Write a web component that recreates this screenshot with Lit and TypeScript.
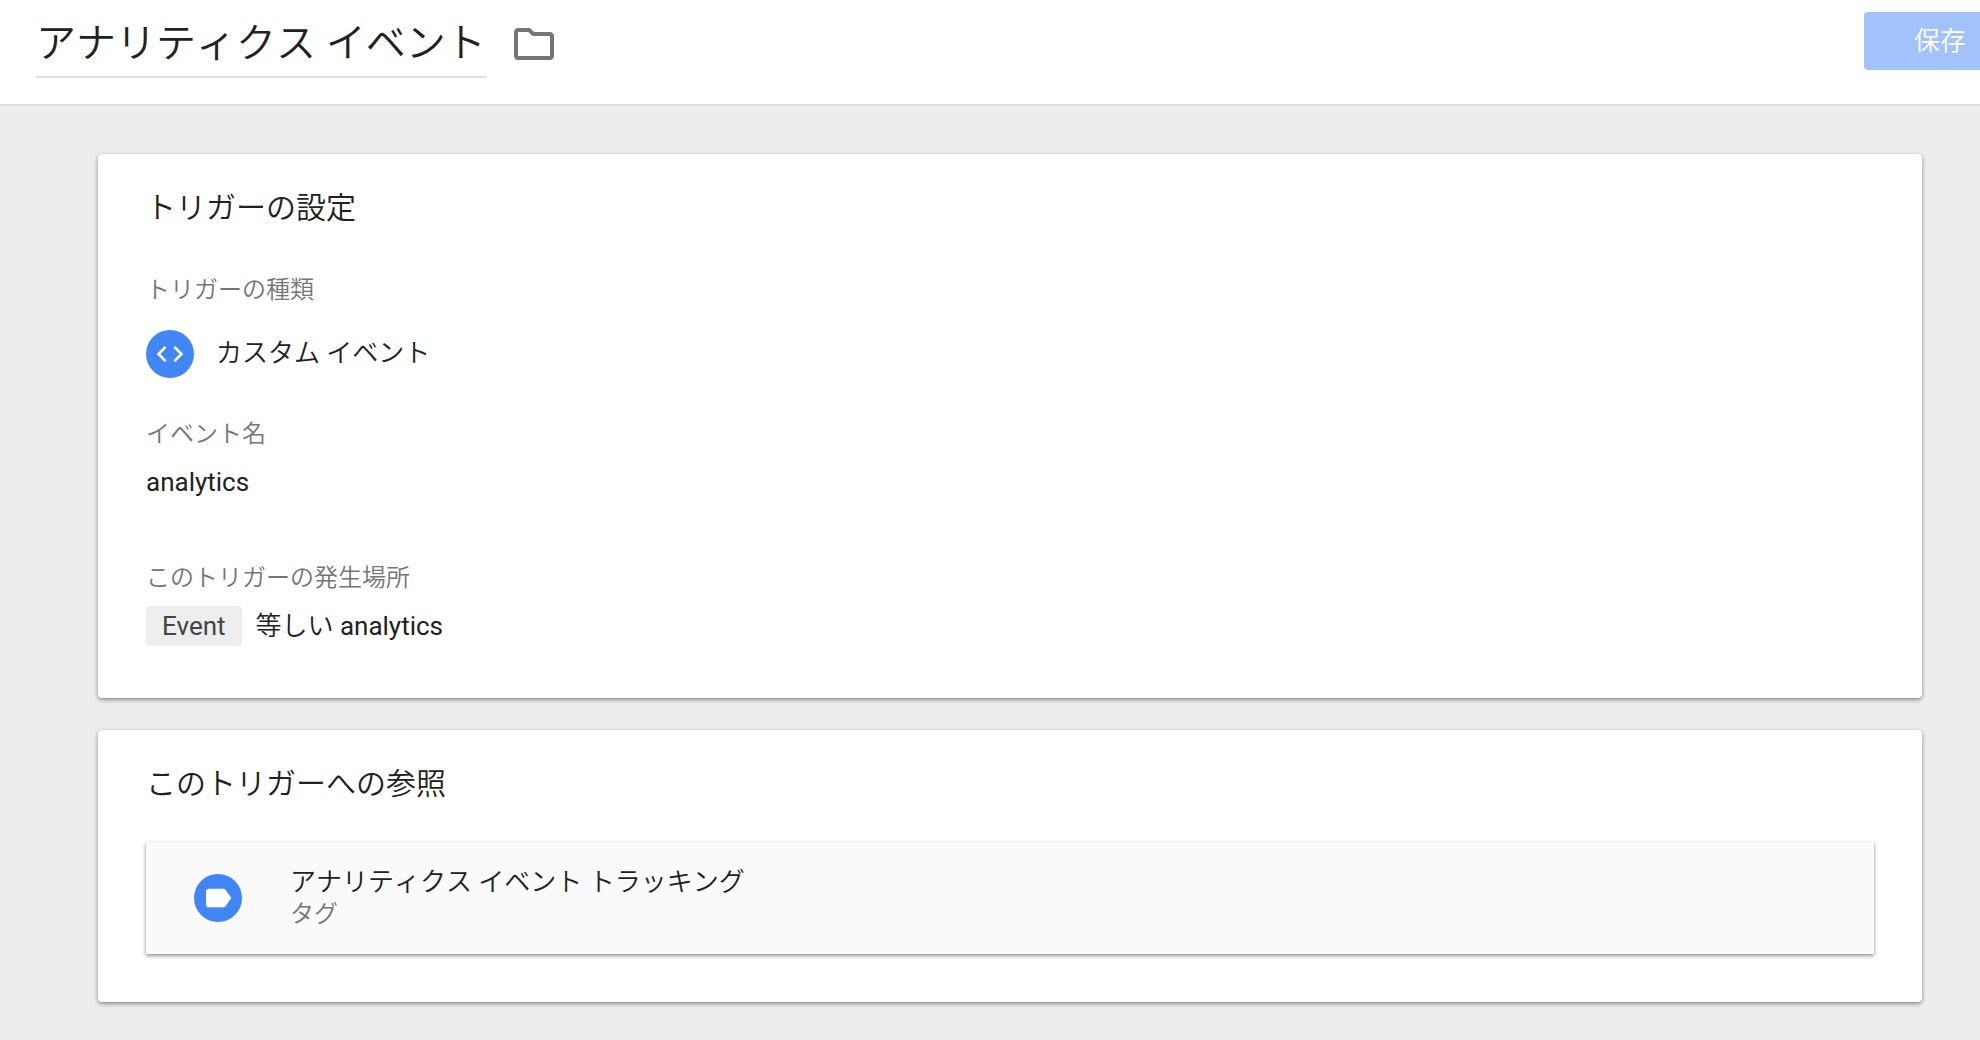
import { LitElement, html, css, svg } from "lit";
import { customElement, property } from "lit/decorators.js";

const icons = {
  folder: svg`<path d="M9.17 6l2 2H20v10H4V6h5.17M10 4H4c-1.1 0-1.99.9-1.99 2L2 18c0 1.1.9 2 2 2h16c1.1 0 2-.9 2-2V8c0-1.1-.9-2-2-2h-8l-2-2z"/>`,
  code: svg`<path d="M9.4 16.6L4.8 12l4.6-4.6L8 6l-6 6 6 6 1.4-1.4zm5.2 0l4.6-4.6-4.6-4.6L16 6l6 6-6 6-1.4-1.4z"/>`,
  tag: svg`<path d="M17.63 5.84C17.27 5.33 16.67 5 16 5L5 5.01C3.9 5.01 3 5.9 3 7v10c0 1.1.9 1.99 2 1.99L16 19c.67 0 1.27-.33 1.63-.84L22 12l-4.37-6.16z"/>`,
};

@customElement("round-icon")
class RoundIcon extends LitElement {
  @property() name: "code" | "tag" = "code";

  static styles = css`
    :host {
      display: flex;
      flex: none;
      align-items: center;
      justify-content: center;
      width: 48px;
      height: 48px;
      border-radius: 50%;
      background: #4285f4;
    }
    .glyph {
      width: 32px;
      height: 32px;
      fill: #fff;
    }
  `;

  render() {
    return html`<svg class="glyph" viewBox="0 0 24 24" aria-hidden="true">${icons[this.name]}</svg>`;
  }
}

@customElement("config-card")
class ConfigCard extends LitElement {
  @property() heading = "";

  static styles = css`
    :host {
      display: block;
      padding: 34px 48px 48px;
      border-radius: 4px;
      background: #fff;
      box-shadow: 0 2px 4px rgba(0, 0, 0, 0.4), 0 0 2px rgba(0, 0, 0, 0.1);
    }
    .heading {
      margin: 0;
      font-size: 30px;
      font-weight: inherit;
      line-height: 40px;
    }
  `;

  render() {
    return html`<h2 class="heading">${this.heading}</h2><slot></slot>`;
  }
}

@customElement("app-root")
class AppRoot extends LitElement {
  static styles = css`
    :host {
      display: block;
      min-height: 100vh;
      overflow-x: clip;
      background: #ededed;
      color: #212121;
      font-family: Roboto, "Noto Sans CJK JP", sans-serif;
      font-size: 26px;
      font-weight: 350;
      font-kerning: none;
      line-height: 32px;
    }
    .header {
      display: flex;
      align-items: flex-start;
      padding: 12px 0 26px 36px;
      border-bottom: 2px solid #e0e0e0;
      background: #fff;
    }
    .title {
      box-sizing: border-box;
      width: 450px;
      height: 66px;
      padding: 0 0 8px;
      border: 0;
      border-bottom: 2px solid #e0e0e0;
      background: none;
      color: inherit;
      font: inherit;
      font-kerning: none;
      font-size: 40px;
      outline: none;
    }
    .folder {
      margin: 8px 0 0 24px;
      padding: 0;
      border: 0;
      background: none;
      line-height: 0;
    }
    .folder-icon {
      width: 48px;
      height: 48px;
      fill: #757575;
    }
    .save {
      height: 58px;
      margin: 0 -36px 0 auto;
      padding: 0 50px;
      border: 0;
      border-radius: 4px;
      background: #a1c2fa;
      color: #fff;
      font: inherit;
    }
    .content {
      display: grid;
      gap: 32px;
      padding: 48px 58px 38px 98px;
    }
    .fields {
      margin: 46px 0 4px;
    }
    .label,
    .kind {
      color: #757575;
      font-size: 24px;
    }
    .value {
      margin: 0;
    }
    .type {
      display: flex;
      gap: 22px;
      margin: 24px 0 40px;
    }
    .type-name {
      line-height: 46px;
    }
    .latin {
      font-weight: 400;
      font-kerning: auto;
    }
    .event-name {
      margin: 16px 0 64px;
    }
    .condition {
      display: flex;
      gap: 14px;
      margin-top: 12px;
      line-height: 40px;
    }
    .chip {
      padding: 0 16px;
      border-radius: 4px;
      background: #eee;
      color: #444;
      font-weight: 400;
      font-kerning: auto;
    }
    .reference {
      display: flex;
      gap: 48px;
      margin-top: 38px;
      padding: 24px 48px;
      background: #fafafa;
      color: inherit;
      text-decoration: none;
      align-items: center;
      box-shadow: 0 2px 4px rgba(0, 0, 0, 0.4), 0 0 2px rgba(0, 0, 0, 0.1);
    }
    .reference-text {
      display: grid;
    }
  `;

  render() {
    return html`
      <header class="header">
        <input class="title" aria-label="トリガー名" .value=${"アナリティクス イベント"} />
        <button class="folder" aria-label="フォルダ">
          <svg class="folder-icon" viewBox="0 0 24 24" aria-hidden="true">${icons.folder}</svg>
        </button>
        <button class="save" disabled>保存</button>
      </header>
      <main class="content">
        <config-card heading="トリガーの設定">
          <dl class="fields">
            <dt class="label">トリガーの種類</dt>
            <dd class="value type">
              <round-icon name="code"></round-icon>
              <span class="type-name">カスタム イベント</span>
            </dd>
            <dt class="label">イベント名</dt>
            <dd class="value event-name latin">analytics</dd>
            <dt class="label">このトリガーの発生場所</dt>
            <dd class="value condition">
              <span class="chip">Event</span>
              <span>等しい <span class="latin">analytics</span></span>
            </dd>
          </dl>
        </config-card>
        <config-card heading="このトリガーへの参照">
          <a class="reference" href="#tag">
            <round-icon name="tag"></round-icon>
            <span class="reference-text">
              <span>アナリティクス イベント トラッキング</span>
              <span class="kind">タグ</span>
            </span>
          </a>
        </config-card>
      </main>
    `;
  }
}
